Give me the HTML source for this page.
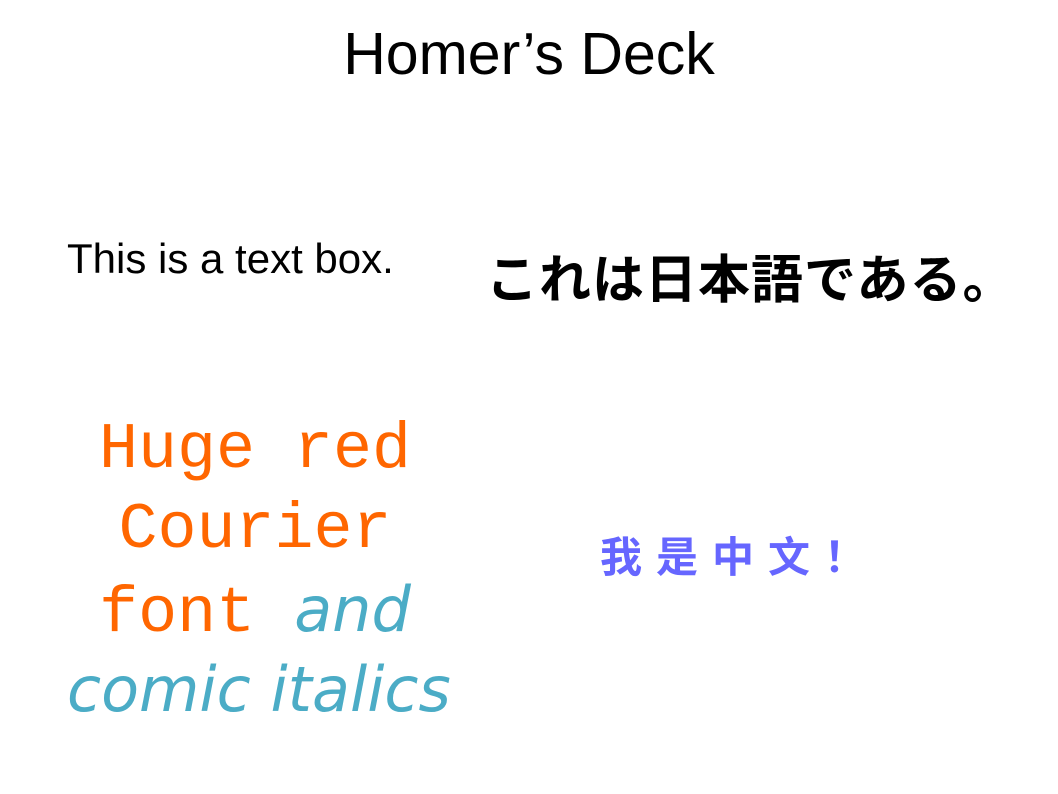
<!DOCTYPE html>
<html><head><meta charset="utf-8"><style>
body{margin:0;width:1058px;height:794px;background:#fff;position:relative;overflow:hidden}
div{position:absolute;white-space:nowrap}
</style></head><body>
<div style="left:0;width:1058px;top:20px;text-align:center;font:59px 'Liberation Sans',sans-serif;color:#000">Homer’s Deck</div>
<div style="left:67px;top:235px;font:42px 'Liberation Sans',sans-serif;color:#000">This is a text box.</div>
<div style="left:486px;top:238px;font:bold 52px 'Liberation Sans','Noto Sans CJK JP',sans-serif;color:#000;letter-spacing:1px">これは日本語である。</div>
<div style="left:600px;top:524px;font:bold 42px 'Liberation Sans','Noto Sans CJK SC',sans-serif;color:#6666ff;letter-spacing:14px">我是中文！</div>
<div style="left:55px;width:400px;top:410px;text-align:center;font:65px/80px 'Liberation Mono',monospace;color:#ff6600">Huge red<br>Courier<br>font <span style="font-family:'DejaVu Sans',sans-serif;font-style:italic;font-size:62px;color:#4bacc6">and</span></div>
<div style="left:67px;top:653px;font:italic 62px 'DejaVu Sans',sans-serif;color:#4bacc6;letter-spacing:0px">comic italics</div>
</body></html>
